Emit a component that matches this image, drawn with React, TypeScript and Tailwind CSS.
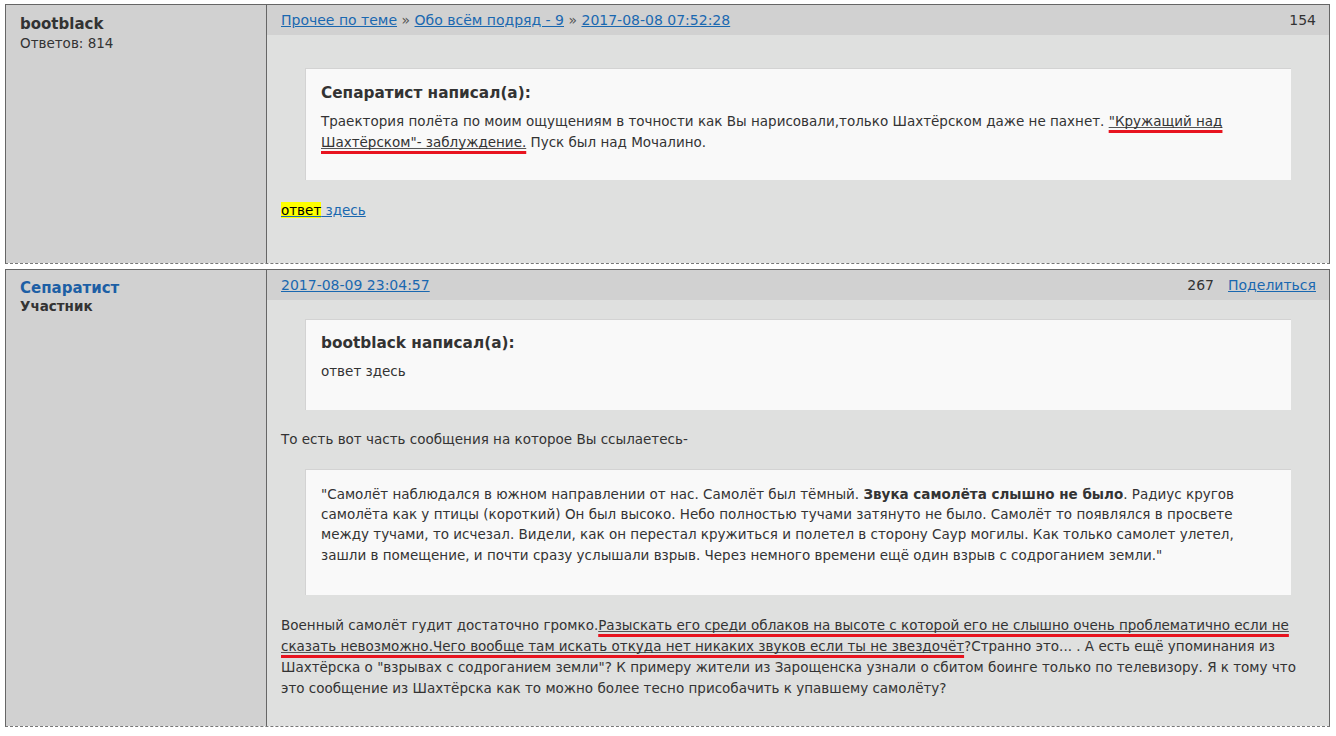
import React from "react";

const font = { fontFamily: '"DejaVu Sans", Verdana, sans-serif' };

function Red({ children }: { children: React.ReactNode }) {
  return (
    <span className="underline decoration-[#e8141f] decoration-[3px] underline-offset-[4px] [text-decoration-skip-ink:none]">
      <span className="underline decoration-[#555] decoration-1 underline-offset-[1px]">{children}</span>
    </span>
  );
}

function Quote({ children, className = "" }: { children: React.ReactNode; className?: string }) {
  return (
    <div className={"mx-[38px] border-t border-l border-[#d3d3d3] bg-[#f9f9f9] px-[15px] " + className}>
      {children}
    </div>
  );
}

function L({ children }: { children: React.ReactNode }) {
  return <div className="whitespace-nowrap">{children}</div>;
}

const link = "text-[#1a68b0] underline";

export default function App() {
  return (
    <div style={font} className="min-h-[736px] bg-white pt-[4px] pl-[5px] pr-[6px] text-[13.5px] leading-[20.5px] text-[#333]">
      {/* Post 1 */}
      <div className="flex border-x border-t border-b border-[#666] border-b-[#777]" style={{ borderBottomStyle: "dashed" }}>
        <div className="w-[261px] shrink-0 border-r border-[#666] bg-[#d1d1d1] px-[14px] pt-[8px]">
          <div className="text-[15px] font-bold leading-[22px] text-[#333]">bootblack</div>
          <div className="leading-[17px]">Ответов: 814</div>
        </div>
        <div className="flex-1 bg-[#dfe0df] pb-[42px]">
          <div className="flex h-[30px] items-center justify-between bg-[#d1d1d1] pl-[14px] pr-[13px] pt-[1px] text-[14px]">
            <div>
              <a className={link}>Прочее по теме</a>
              <span className="text-[#555]"> » </span>
              <a className={link}>Обо всём подряд - 9</a>
              <span className="text-[#555]"> » </span>
              <a className={link}>2017-08-08 07:52:28</a>
            </div>
            <div>154</div>
          </div>
          <Quote className="mt-[33px] pt-[13px] pb-[28px]">
            <div className="mb-[7px] text-[15.3px] font-bold leading-[22px]">Сепаратист написал(а):</div>
            <L>
              Траектория полёта по моим ощущениям в точности как Вы нарисовали,только Шахтёрском даже не пахнет. <Red>"Кружащий над </Red>
            </L>
            <L>
              <Red>Шахтёрском"- заблуждение.</Red> Пуск был над Мочалино.
            </L>
          </Quote>
          <div className="mt-[20px] pl-[14px]">
            <a className={link}>
              <span className="bg-[#ffff00] text-black">ответ</span> здесь
            </a>
          </div>
        </div>
      </div>

      {/* Post 2 */}
      <div className="mt-[5px] flex border-x border-t border-b border-[#666] border-b-[#777]" style={{ borderBottomStyle: "dashed" }}>
        <div className="w-[261px] shrink-0 border-r border-[#666] bg-[#d1d1d1] px-[14px] pt-[7px]">
          <div className="text-[15px] font-bold leading-[22px] text-[#1d5fa5]">Сепаратист</div>
          <div className="font-bold leading-[15px] text-[#333]">Участник</div>
        </div>
        <div className="flex-1 bg-[#dfe0df] pb-[27px]">
          <div className="flex h-[30px] items-center justify-between bg-[#d1d1d1] pl-[14px] pr-[13px] pt-[1px] text-[14px]">
            <a className={link}>2017-08-09 23:04:57</a>
            <div className="flex items-center gap-[14px]">
              <span>267</span>
              <a className={link}>Поделиться</a>
            </div>
          </div>
          <Quote className="mt-[19px] pt-[12px] pb-[29px]">
            <div className="mb-[7px] text-[15.3px] font-bold leading-[22px]">bootblack написал(а):</div>
            <div>ответ здесь</div>
          </Quote>
          <div className="mt-[19px] pl-[14px]">То есть вот часть сообщения на которое Вы ссылаетесь-</div>
          <Quote className="mt-[19px] pt-[14px] pb-[30px] leading-[20.4px]">
            <L>
              "Самолёт наблюдался в южном направлении от нас. Самолёт был тёмный. <b>Звука самолёта слышно не было</b>. Радиус кругов
            </L>
            <L>самолёта как у птицы (короткий) Он был высоко. Небо полностью тучами затянуто не было. Самолёт то появлялся в просвете</L>
            <L>между тучами, то исчезал. Видели, как он перестал кружиться и полетел в сторону Саур могилы. Как только самолет улетел,</L>
            <L>зашли в помещение, и почти сразу услышали взрыв. Через немного времени ещё один взрыв с содроганием земли."</L>
          </Quote>
          <div className="mt-[20px] pl-[14px] leading-[21px]">
            <L>
              Военный самолёт гудит достаточно громко.
              <Red>Разыскать его среди облаков на высоте с которой его не слышно очень проблематично если не</Red>
            </L>
            <L>
              <Red>сказать невозможно.Чего вообще там искать откуда нет никаких звуков если ты не звездочёт</Red>?Странно это... . А есть ещё упоминания из
            </L>
            <L>Шахтёрска о "взрывах с содроганием земли"? К примеру жители из Зарощенска узнали о сбитом боинге только по телевизору. Я к тому что</L>
            <L>это сообщение из Шахтёрска как то можно более тесно присобачить к упавшему самолёту?</L>
          </div>
        </div>
      </div>
    </div>
  );
}
